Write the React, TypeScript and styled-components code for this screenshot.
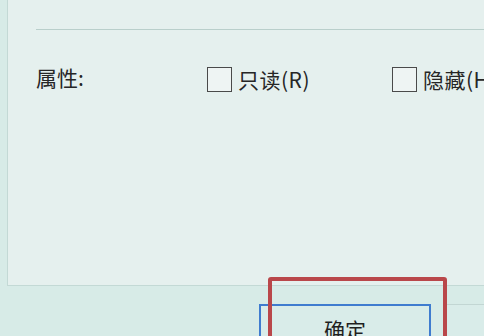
import styled, { createGlobalStyle } from 'styled-components';

const GlobalStyle = createGlobalStyle`
  html, body {
    margin: 0;
    padding: 0;
    overflow: hidden;
  }
  body {
    font-family: "Noto Sans CJK SC", "Noto Sans", sans-serif;
    color: #222;
  }
`;

const attributes = [
  { id: 'readonly', label: '只读(R)' },
  { id: 'hidden', label: '隐藏(H)' },
];

const App = () => {
  return (
    <>
      <GlobalStyle />
      <StyledDialog>
        <StyledPanel>
          <StyledSeparator />
          <StyledAttrRow>
            <StyledLabel>属性:</StyledLabel>
            {attributes.map((item) => (
              <StyledCheckItem key={item.id}>
                <StyledCheckbox type="checkbox" aria-label={item.label} />
                <StyledCheckText>{item.label}</StyledCheckText>
              </StyledCheckItem>
            ))}
          </StyledAttrRow>
        </StyledPanel>

        <StyledFooter>
          <StyledButton primary>确定</StyledButton>
          <StyledButton>取消</StyledButton>
          <StyledHighlight />
        </StyledFooter>
      </StyledDialog>
    </>
  );
};

export default App;

const StyledDialog = styled.div`
  width: 484px;
  height: 336px;
  background: #d7ebe7;
  display: flex;
  flex-direction: column;
  overflow: hidden;
`;

const StyledPanel = styled.div`
  margin-left: 7px;
  height: 286px;
  flex-shrink: 0;
  background: #e5f0ee;
  border-left: 1px solid #c3d9d5;
  border-bottom: 1px solid #c3d9d5;
  padding-top: 29px;
  box-sizing: border-box;
  display: flex;
  flex-direction: column;
`;

const StyledSeparator = styled.div`
  margin-left: 28px;
  height: 1px;
  background: #b9cfcb;
`;

const StyledAttrRow = styled.div`
  margin-top: 36px;
  margin-left: 28px;
  display: flex;
  align-items: center;
  height: 26px;
  white-space: nowrap;
`;

const StyledLabel = styled.div`
  width: 171px;
  flex-shrink: 0;
  font-size: 21px;
  line-height: 26px;
  margin-top: -5px;
  color: #262626;
`;

const StyledCheckItem = styled.label`
  width: 185px;
  flex-shrink: 0;
  display: flex;
  align-items: center;
  gap: 6px;
`;

const StyledCheckbox = styled.input`
  appearance: none;
  margin: 0;
  width: 25px;
  height: 25px;
  flex-shrink: 0;
  box-sizing: border-box;
  border: 1.5px solid #4a4a4a;
  background: #eef4f3;
`;

const StyledCheckText = styled.span`
  font-size: 21px;
  line-height: 26px;
  letter-spacing: 0.5px;
  color: #262626;
`;

const StyledFooter = styled.div`
  position: relative;
  flex: 1;
  display: flex;
  align-items: flex-start;
  gap: 13px;
  padding-left: 259px;
  padding-top: 18px;
`;

const StyledButton = styled.button<{ primary?: boolean }>`
  flex-shrink: 0;
  width: 172px;
  height: 52px;
  box-sizing: border-box;
  border: ${({ primary }) => (primary ? '2px solid #3f7ccf' : '1px solid #c2d6d3')};
  background: #d9ece9;
  font-family: "Noto Sans CJK SC", "Noto Sans", sans-serif;
  font-size: 21px;
  color: #1f1f1f;
  padding: 8px 0 0;
  display: flex;
  justify-content: center;
  align-items: flex-start;
`;

const StyledHighlight = styled.div`
  position: absolute;
  left: 268px;
  top: -9px;
  width: 179px;
  height: 90px;
  box-sizing: border-box;
  border: 4px solid #b9474a;
  border-radius: 3px;
  pointer-events: none;
`;
